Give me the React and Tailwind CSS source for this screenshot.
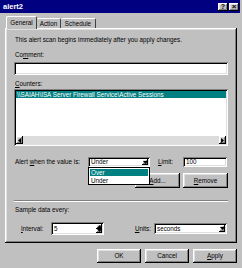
import React from "react";

const raised =
  "shadow-[inset_-1px_-1px_#000,inset_1px_1px_#fff,inset_-2px_-2px_#808080,inset_2px_2px_#dfdfdf]";
const sunken =
  "shadow-[inset_1px_1px_#808080,inset_-1px_-1px_#fff,inset_2px_2px_#000,inset_-2px_-2px_#dfdfdf]";

function Arrow({ dir = "down" }) {
  const d = {
    down: "M0 0h5L2.5 3z",
    up: "M0 3h5L2.5 0z",
    left: "M3 0v5L0 2.5z",
    right: "M0 0v5L3 2.5z",
  }[dir];
  const w = dir === "left" || dir === "right" ? 3 : 5;
  const h = dir === "left" || dir === "right" ? 5 : 3;
  return (
    <svg width={w} height={h} viewBox={`0 0 ${w} ${h}`}>
      <path d={d} fill="#000" />
    </svg>
  );
}

function Btn({ children, className = "" }) {
  return (
    <div className={`flex items-center justify-center bg-[#c0c0c0] ${raised} ${className}`}>
      {children}
    </div>
  );
}

function Combo({ value, className = "" }) {
  return (
    <div className={`flex items-center bg-white ${sunken} p-[2px] ${className}`}>
      <span className="flex-1 pl-[1px]">{value}</span>
      <Btn className="w-[6px] h-full">
        <Arrow />
      </Btn>
    </div>
  );
}

export default function App() {
  return (
    <div className="w-[242px] h-[268px] bg-[#c0c0c0] flex flex-col text-black text-[6.3px] leading-[8px] font-['Liberation_Sans',Arial,sans-serif] overflow-hidden">
      {/* Title bar */}
      <div className="h-[13px] mr-[2px] bg-[#000080] flex items-center justify-between pl-[3px] pr-[1px]">
        <span className="text-white font-bold text-[7.5px]">alert2</span>
        <div className="flex gap-[1px]">
          <Btn className="w-[10px] h-[8px] font-bold text-[7px]">?</Btn>
          <Btn className="w-[10px] h-[8px] font-bold text-[8px]">×</Btn>
        </div>
      </div>

      {/* Tabs */}
      <div className="mt-[3px] ml-[6px] h-[12px] flex items-end relative z-10">
        <div className="w-[31px] h-[13px] -mb-px bg-[#c0c0c0] border-l border-t border-white border-r border-r-[#404040] rounded-t-[2px] flex items-center justify-center">
          General
        </div>
        <div className="w-[24px] h-[10px] border-t border-white border-r border-r-[#404040] rounded-t-[2px] flex items-center justify-center">
          Action
        </div>
        <div className="w-[35px] h-[10px] border-t border-white border-r border-r-[#404040] rounded-t-[2px] flex items-center justify-center">
          Schedule
        </div>
      </div>

      {/* Tab panel */}
      <div className={`mx-[5px] h-[215px] relative flex flex-col px-[9px] pt-[8px] ${raised}`}>
        <p className="ml-[1px]">This alert scan begins immediately after you apply changes.</p>

        <p className="ml-[1px] mt-[7px]">
          Co<span className="underline">m</span>ment:
        </p>
        <div className={`mt-[3px] h-[13px] bg-white ${sunken}`} />

        <p className="ml-[1px] mt-[5px]">
          <span className="underline">C</span>ounters:
        </p>
        <div className={`mt-[1px] h-[57px] bg-white ${sunken} p-[2px] flex flex-col`}>
          <div className="h-[7px] bg-[#008080] text-white flex items-center pl-[1px] leading-[7px]">
            \\SAIAH\ISA Server Firewall Service\Active Sessions
          </div>
          <div className="flex-1" />
          <div className="h-[8px] flex bg-[#dcdcdc]">
            <Btn className="w-[7px] h-full">
              <Arrow dir="left" />
            </Btn>
            <div className="flex-1" />
            <Btn className="w-[7px] h-full">
              <Arrow dir="right" />
            </Btn>
          </div>
        </div>

        {/* Alert row */}
        <div className="mt-[11px] h-[10px] flex items-center">
          <span className="w-[74px] pl-[1px]">
            Alert <span className="underline">w</span>hen the value is:
          </span>
          <Combo value="Under" className="w-[62px] h-[10px]" />
          <span className="w-[25px] ml-[8px]">
            <span className="underline">L</span>imit:
          </span>
          <div className={`w-[44px] h-[10px] bg-white ${sunken} flex items-center pl-[3px]`}>100</div>
        </div>

        <div className="mt-[6px] flex justify-end gap-[3px]">
          <Btn className="w-[45px] h-[15px]">
            <span className="underline">A</span>dd...
          </Btn>
          <Btn className="w-[45px] h-[15px]">
            <span className="underline">R</span>emove
          </Btn>
        </div>

        {/* Dropdown list over the row below */}
        <div className="absolute left-[83px] top-[139px] w-[62px] h-[18px] bg-white border border-black flex flex-col p-[1px]">
          <div className="h-[7px] leading-[7px] bg-[#008080] text-white pl-[1px]">Over</div>
          <div className="h-[7px] leading-[7px] pl-[1px] mt-[1px]">Under</div>
        </div>

        <div className="mt-[12px] border-t border-[#808080] border-b border-b-white" />

        <p className="ml-[1px] mt-[4px]">Sample data every:</p>

        <div className="mt-[8px] h-[13px] flex items-center">
          <span className="w-[30px] ml-[7px]">
            <span className="underline">I</span>nterval:
          </span>
          <div className={`w-[53px] h-[13px] bg-white ${sunken} p-[2px] flex items-center`}>
            <span className="flex-1 pl-[1px]">5</span>
            <div className="w-[6px] h-full flex flex-col">
              <Btn className="flex-1">
                <Arrow dir="up" />
              </Btn>
              <Btn className="flex-1">
                <Arrow dir="down" />
              </Btn>
            </div>
          </div>
          <div className="flex-1" />
          <span className="mr-[3px]">
            <span className="underline">U</span>nits:
          </span>
          <Combo value="seconds" className="w-[73px] h-[11px] mr-[1px]" />
        </div>
      </div>

      {/* Dialog buttons */}
      <div className="mt-[6px] flex justify-end gap-[4px] pr-[5px]">
        <Btn className="w-[44px] h-[14px] shadow-[inset_-1px_-1px_#000,inset_1px_1px_#000,inset_-2px_-2px_#000,inset_2px_2px_#fff,inset_-3px_-3px_#808080]">
          OK
        </Btn>
        <Btn className="w-[44px] h-[14px]">Cancel</Btn>
        <Btn className="w-[44px] h-[14px]">
          <span className="underline">A</span>pply
        </Btn>
      </div>
    </div>
  );
}
